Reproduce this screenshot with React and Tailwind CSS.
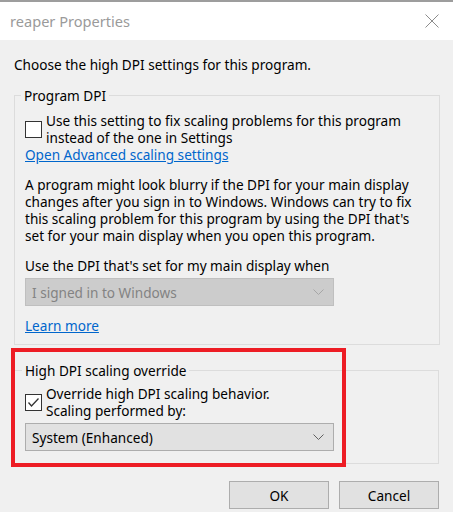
import { useState } from "react";

function Checkbox({ checked }) {
  return (
    <div className="w-[17px] h-[17px] shrink-0 border border-[#333333] bg-white flex items-center justify-center">
      {checked && (
        <svg width="15" height="15" viewBox="0 0 15 15">
          <polyline points="2.5,7.5 5.5,11 12.5,3.5" fill="none" stroke="#333333" strokeWidth="1.3" />
        </svg>
      )}
    </div>
  );
}

function Chevron({ color }) {
  return (
    <svg width="11" height="7" viewBox="0 0 11 7">
      <polyline points="0.5,0.5 5.5,5.5 10.5,0.5" fill="none" stroke={color} strokeWidth="1" />
    </svg>
  );
}

function Select({ value, disabled }) {
  return (
    <div
      className={
        disabled
          ? "w-[309px] h-[28px] flex items-center justify-between pl-[6px] pr-[9px] border border-[#bfbfbf] bg-[#cccccc] text-[#838383]"
          : "w-[309px] h-[28px] flex items-center justify-between pl-[6px] pr-[9px] border border-[#adadad] bg-[#e1e1e1] text-black"
      }
    >
      <span>{value}</span>
      <Chevron color={disabled ? "#a6a6a6" : "#606060"} />
    </div>
  );
}

export default function App() {
  const [override] = useState(true);

  return (
    <div
      className="relative w-[453px] h-[512px] overflow-hidden bg-[#f0f0f0] text-[13.6px] leading-[17px] text-black"
      style={{ fontFamily: '"Noto Sans", "Open Sans", sans-serif' }}
    >
      <div className="h-[2px] bg-[#9d9d9d]" />
      <div className="h-[38px] bg-white flex items-center justify-between pl-[10px] pr-[14px]">
        <span className="text-[14.6px] text-[#9a9a9a]">reaper Properties</span>
        <svg width="14" height="14" viewBox="0 0 14 14">
          <path d="M0.5 0.5 L13.5 13.5 M13.5 0.5 L0.5 13.5" stroke="#8c8c8c" strokeWidth="1" />
        </svg>
      </div>

      <div className="pt-[16px] pl-[14px]">Choose the high DPI settings for this program.</div>

      <fieldset className="mt-[14px] ml-[14px] mr-[13px] border border-[#dcdcdc] pl-[10px] pb-[10px]">
        <legend className="ml-[-4px] px-[3px]">Program DPI</legend>
        <div className="mt-[8px] flex items-center gap-[4px]">
          <Checkbox checked={false} />
          <div>
            Use this setting to fix scaling problems for this program
            <br />
            instead of the one in Settings
          </div>
        </div>
        <div className="text-[#0066cc] underline w-fit">Open Advanced scaling settings</div>
        <p className="mt-[13px] pr-[10px]">
          A program might look blurry if the DPI for your main display
          <br />
          changes after you sign in to Windows. Windows can try to fix
          <br />
          this scaling problem for this program by using the DPI that's
          <br />
          set for your main display when you open this program.
        </p>
        <div className="mt-[13px]">Use the DPI that's set for my main display when</div>
        <div className="mt-[4px]">
          <Select value="I signed in to Windows" disabled />
        </div>
        <div className="mt-[11px] text-[#0066cc] underline w-fit">Learn more</div>
      </fieldset>

      <fieldset className="mt-[17px] ml-[14px] mr-[14px] border border-[#dcdcdc] pl-[10px] pb-[12px]">
        <legend className="ml-[-3px] px-[3px]">High DPI scaling override</legend>
        <div className="mt-[6px] flex items-center gap-[4px]">
          <Checkbox checked={override} />
          <div>
            Override high DPI scaling behavior.
            <br />
            Scaling performed by:
          </div>
        </div>
        <div className="mt-[4px]">
          <Select value="System (Enhanced)" />
        </div>
      </fieldset>

      <div className="mt-[17px] flex justify-end gap-[10px] pr-[14px]">
        <button className="w-[100px] h-[28px] border border-[#adadad] bg-[#e1e1e1]">OK</button>
        <button className="w-[100px] h-[28px] border border-[#adadad] bg-[#e1e1e1]">Cancel</button>
      </div>

      <div className="absolute left-[11px] top-[348px] w-[335px] h-[119px] border-[4px] border-[#ed1c24]" />
    </div>
  );
}
